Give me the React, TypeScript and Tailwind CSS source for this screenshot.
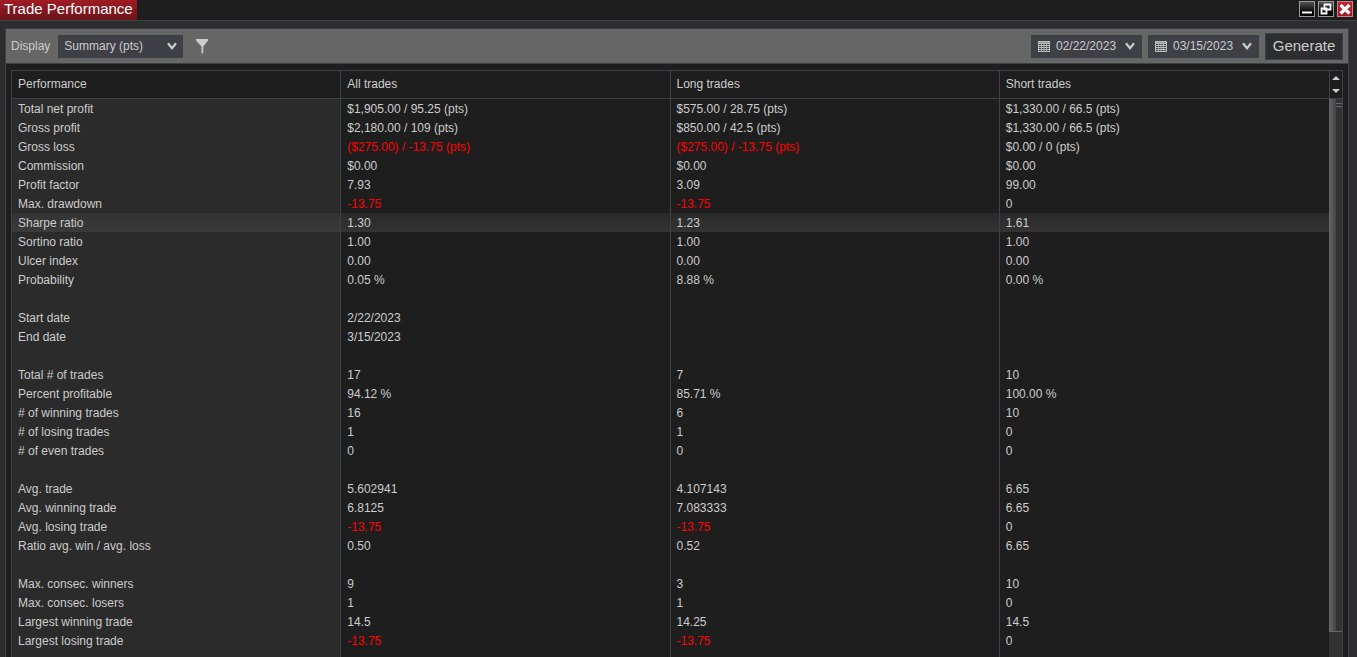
import { useState } from "react";
import type { ReactNode } from "react";
import clsx from "clsx";

type Row = [string, string?, string?, string?];

const COLUMNS = ["Performance", "All trades", "Long trades", "Short trades"];

const ROWS: Row[] = [
  ["Total net profit", "$1,905.00 / 95.25 (pts)", "$575.00 / 28.75 (pts)", "$1,330.00 / 66.5 (pts)"],
  ["Gross profit", "$2,180.00 / 109 (pts)", "$850.00 / 42.5 (pts)", "$1,330.00 / 66.5 (pts)"],
  ["Gross loss", "($275.00) / -13.75 (pts)", "($275.00) / -13.75 (pts)", "$0.00 / 0 (pts)"],
  ["Commission", "$0.00", "$0.00", "$0.00"],
  ["Profit factor", "7.93", "3.09", "99.00"],
  ["Max. drawdown", "-13.75", "-13.75", "0"],
  ["Sharpe ratio", "1.30", "1.23", "1.61"],
  ["Sortino ratio", "1.00", "1.00", "1.00"],
  ["Ulcer index", "0.00", "0.00", "0.00"],
  ["Probability", "0.05 %", "8.88 %", "0.00 %"],
  [""],
  ["Start date", "2/22/2023"],
  ["End date", "3/15/2023"],
  [""],
  ["Total # of trades", "17", "7", "10"],
  ["Percent profitable", "94.12 %", "85.71 %", "100.00 %"],
  ["# of winning trades", "16", "6", "10"],
  ["# of losing trades", "1", "1", "0"],
  ["# of even trades", "0", "0", "0"],
  [""],
  ["Avg. trade", "5.602941", "4.107143", "6.65"],
  ["Avg. winning trade", "6.8125", "7.083333", "6.65"],
  ["Avg. losing trade", "-13.75", "-13.75", "0"],
  ["Ratio avg. win / avg. loss", "0.50", "0.52", "6.65"],
  [""],
  ["Max. consec. winners", "9", "3", "10"],
  ["Max. consec. losers", "1", "1", "0"],
  ["Largest winning trade", "14.5", "14.25", "14.5"],
  ["Largest losing trade", "-13.75", "-13.75", "0"],
];

const isNegative = (value = "") => /^[-(]/.test(value);

export default function App() {
  const [selected, setSelected] = useState(6);

  return (
    <div className="flex h-screen flex-col overflow-hidden bg-[#2d2d30] font-['Liberation_Sans',Arial,sans-serif] text-[#ccc]">
      <TitleBar />
      <main className="mt-[7px] mr-2 ml-[5px] flex min-h-0 flex-1 flex-col border border-b-0 border-[#3f3f46] bg-[#1e1e1e]">
        <Toolbar />
        <div className="mx-[5px] mt-[6px] flex min-h-0 flex-1 border border-b-0 border-[#3f3f46]">
          <div className="flex min-w-0 flex-1 flex-col">
            <table className="w-full table-fixed border-separate border-spacing-0 text-left text-[12px]">
              <thead>
                <tr className="h-7">
                  {COLUMNS.map((column) => (
                    <th
                      key={column}
                      className="border-r border-b border-[#3f3f46] px-1.5 pt-0 pb-px font-normal last:border-r-0"
                    >
                      {column}
                    </th>
                  ))}
                </tr>
              </thead>
              <tbody>
                {ROWS.map((row, index) => (
                  <TableRow
                    key={index}
                    row={row}
                    isSelected={index === selected}
                    onSelect={() => setSelected(index)}
                  />
                ))}
              </tbody>
            </table>
            {/* Column stripes below the last row */}
            <div className="grid flex-1 grid-cols-4">
              <div className="border-r border-[#3f3f46] bg-[#2b2b2b]" />
              <div className="border-r border-[#3f3f46]" />
              <div className="border-r border-[#3f3f46]" />
            </div>
          </div>
          <ScrollBar />
        </div>
      </main>
    </div>
  );
}

function TitleBar() {
  return (
    <header className="flex h-[21px] shrink-0 justify-between border-b border-[#3f3f46] bg-[#1e1e1e]">
      <h1 className="bg-linear-to-b from-[#a01c24] to-[#6c1219] px-1 text-[15px] leading-[18px] text-white">
        Trade Performance
      </h1>
      <div className="mt-px mr-1 flex gap-[3px]">
        <WindowButton label="Minimize">
          <path d="M3 10.5h10v2H3z" fill="#fff" />
        </WindowButton>
        <WindowButton label="Restore">
          <path d="M6.5 3.5h6v5h-6zM3.5 7.5h5v5h-5z" fill="none" stroke="#fff" strokeWidth="1.8" />
        </WindowButton>
        <WindowButton label="Close" isClose>
          <path d="M3.5 4l9 8.500M12.500 4l-9 8.500" stroke="#fff" strokeWidth="3.2" />
        </WindowButton>
      </div>
    </header>
  );
}

interface WindowButtonProps {
  label: string;
  isClose?: boolean;
  children: ReactNode;
}

function WindowButton({ label, isClose, children }: WindowButtonProps) {
  return (
    <button
      type="button"
      aria-label={label}
      className={clsx(
        "flex size-4 items-center justify-center border",
        isClose
          ? "border-[#c9858a] bg-linear-to-b from-[#c0262e] to-[#a01820]"
          : "border-[#999] bg-linear-to-b from-[#555] to-[#000]",
      )}
    >
      <svg viewBox="0 0 16 16" className="size-4 shrink-0" aria-hidden="true">
        {children}
      </svg>
    </button>
  );
}

function Toolbar() {
  const [display, setDisplay] = useState("Summary (pts)");

  return (
    <div className="flex h-[35px] shrink-0 items-center border-b border-[#3f3f46] bg-[#666] px-[5px]">
      <label htmlFor="display" className="mr-2 text-[12px]">
        Display
      </label>
      <div className="relative">
        <select
          id="display"
          value={display}
          onChange={(e) => setDisplay(e.target.value)}
          className="block h-[23px] w-[125px] appearance-none bg-[#3f3f46] px-1.5 text-[12px]"
        >
          <option>Summary (pts)</option>
        </select>
        <Chevron className="pointer-events-none absolute top-[7px] right-1.5" />
      </div>
      <button type="button" aria-label="Filter" className="ml-[13px]">
        <svg viewBox="0 0 12 15" className="h-[15px] w-3" aria-hidden="true">
          <path d="M0 0h12v1.500L7.300 7.500v6L5.500 15V7.500L0 1.500z" fill="#ccc" />
        </svg>
      </button>
      <div className="ml-auto flex items-center gap-1.5">
        <DatePicker label="Start date" value="02/22/2023" />
        <DatePicker label="End date" value="03/15/2023" />
        <button type="button" className="h-[27px] w-[78px] border border-[#3f3f46] bg-[#2d2d30] text-[15px]">
          Generate
        </button>
      </div>
    </div>
  );
}

function DatePicker({ label, value }: { label: string; value: string }) {
  return (
    <button
      type="button"
      aria-label={`${label} ${value}`}
      className="flex h-[23px] w-[111px] items-center bg-[#3f3f46] px-[7px] text-[12px]"
    >
      <svg viewBox="0 0 12 11" className="mr-1.5 h-[11px] w-3 shrink-0" aria-hidden="true">
        <path d="M0 0h12v11H0z" fill="#bbb" />
        <path d="M1 1.500h10" stroke="#999" />
        <path d="M1 3.500h10M1 5.500h10M1 7.500h10M1 9.500h10" stroke="#3f3f46" />
        <path d="M3.500 3v7M6 3v7M8.500 3v7" stroke="#bbb" strokeWidth="0.8" />
      </svg>
      {value}
      <Chevron className="ml-auto" />
    </button>
  );
}

function Chevron({ className }: { className?: string }) {
  return (
    <svg viewBox="0 0 10 8" className={clsx("h-2 w-2.5 shrink-0", className)} aria-hidden="true">
      <path d="M1 1.200l4 5 4-5" fill="none" stroke="#ccc" strokeWidth="2.2" />
    </svg>
  );
}

interface TableRowProps {
  row: Row;
  isSelected: boolean;
  onSelect: () => void;
}

function TableRow({ row, isSelected, onSelect }: TableRowProps) {
  const [name, ...values] = row;

  return (
    <tr onClick={onSelect} className="h-[19px] leading-[18px]">
      <th
        className={clsx(
          "border-r border-[#3f3f46] px-1.5 pt-px pb-0 font-normal",
          isSelected ? "bg-linear-to-b from-[#333] to-[#3a3a3b]" : "bg-[#2b2b2b]",
        )}
      >
        {name}
      </th>
      {[0, 1, 2].map((i) => (
        <td
          key={i}
          className={clsx(
            "border-r border-[#3f3f46] px-1.5 pt-px pb-0 last:border-r-0",
            isSelected && "bg-linear-to-b from-[#2a2a2a] to-[#333]",
            isNegative(values[i]) && "text-[#f00]",
          )}
        >
          {values[i]}
        </td>
      ))}
    </tr>
  );
}

function ScrollBar() {
  return (
    <div className="flex w-[13px] shrink-0 flex-col">
      <div className="flex h-7 flex-col items-center justify-between border-b border-l border-[#3f3f46] py-[5px]">
        <button type="button" aria-label="Scroll up">
          <svg viewBox="0 0 8 4" className="block h-1 w-2" aria-hidden="true">
            <path d="M0 4l4-4 4 4z" fill="#ccc" />
          </svg>
        </button>
        <button type="button" aria-label="Scroll down">
          <svg viewBox="0 0 8 4" className="block h-1 w-2" aria-hidden="true">
            <path d="M0 0l4 4 4-4z" fill="#ccc" />
          </svg>
        </button>
      </div>
      <div className="flex-1 bg-[#333]">
        <div className="flex h-[95.5%] border-b border-[#666]">
          <div className="w-[7px] bg-linear-to-r from-[#666] to-[#444]" />
          <div className="mt-1 h-1 flex-1 border-y border-[#666]" />
        </div>
      </div>
    </div>
  );
}
